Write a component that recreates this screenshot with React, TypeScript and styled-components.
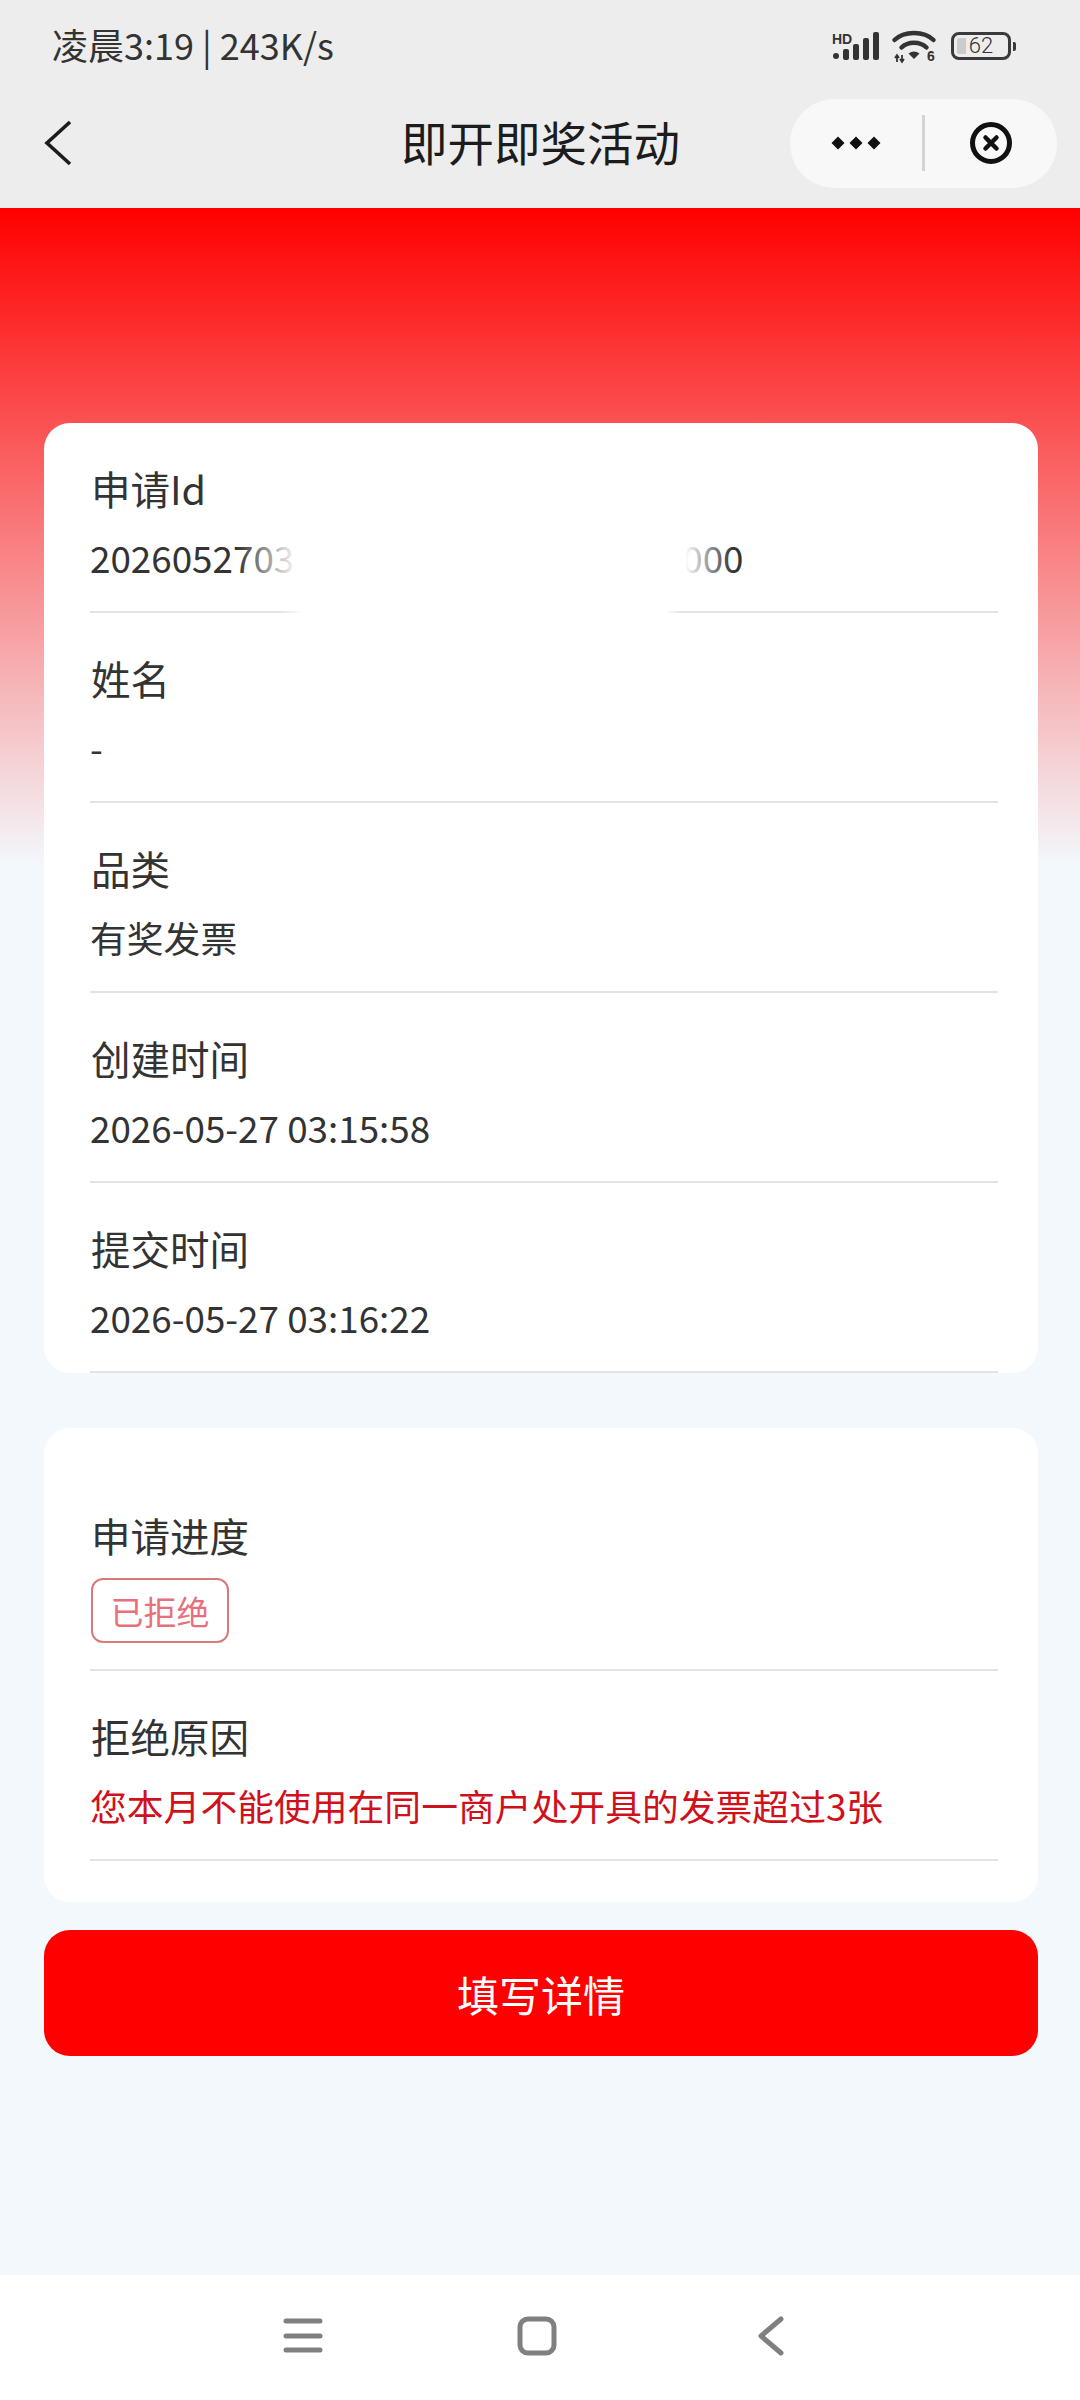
import React from "react";
import styled, { createGlobalStyle } from "styled-components";

const GlobalStyle = createGlobalStyle`
  html, body {
    margin: 0;
    padding: 0;
    background: #f3f8fc;
  }
  * {
    box-sizing: border-box;
  }
`;

const FONT = `"Noto Sans CJK SC", "Noto Sans", sans-serif`;

const App = () => {
  return (
    <Page>
      <GlobalStyle />
      <TopArea>
        <StatusBar>
          <StatusText>凌晨3:19 | 243K/s</StatusText>
          <StatusIcons>
            <svg width="48" height="30" viewBox="0 0 48 30" overflow="visible">
              <text x="0" y="13" fontFamily="Liberation Sans, sans-serif" fontSize="14" fontWeight="700" fill="#333">HD</text>
              <rect x="1" y="22" width="6" height="6" rx="3" fill="#333" />
              <rect x="11" y="18" width="6" height="11" rx="2" fill="#333" />
              <rect x="21" y="13" width="6" height="16" rx="2" fill="#333" />
              <rect x="31" y="7" width="6" height="22" rx="2" fill="#333" />
              <rect x="41" y="1" width="6" height="28" rx="2" fill="#333" />
            </svg>
            <svg width="44" height="33" viewBox="0 0 44 33" overflow="visible">
              <path d="M2.5 10 C12 0.5 32 0.5 41.5 10" fill="none" stroke="#333" strokeWidth="4.5" strokeLinecap="round" />
              <path d="M9.5 17.5 C16 11 28 11 34.5 17.5" fill="none" stroke="#333" strokeWidth="4.5" strokeLinecap="round" />
              <path d="M16.5 23.5 Q22 19.5 27.5 23.5 L22 29 Z" fill="#333" />
              <path d="M5 26 V32 M3 28 L5 25 L7 28 M10 25 V32 M8 29 L10 32 L12 29" fill="none" stroke="#333" strokeWidth="1.8" />
              <text x="35" y="31" fontFamily="Liberation Sans, sans-serif" fontSize="14" fontWeight="700" fill="#333">6</text>
            </svg>
            <BatteryWrap>
              <BatteryBody>
                <BatteryFill />
                <BatteryText>62</BatteryText>
              </BatteryBody>
              <BatteryNub />
            </BatteryWrap>
          </StatusIcons>
        </StatusBar>
        <NavBar>
          <BackButton>
            <svg width="28" height="46" viewBox="0 0 28 46">
              <path d="M26 2 L3 23 L26 44" fill="none" stroke="#1c1c1c" strokeWidth="3.6" />
            </svg>
          </BackButton>
          <NavTitle>即开即奖活动</NavTitle>
          <Capsule>
            <CapsuleSide>
              <svg width="50" height="14" viewBox="0 0 50 14">
                <path d="M7 0.5 L13.5 7 L7 13.5 L0.5 7 Z M25 0.5 L31.5 7 L25 13.5 L18.5 7 Z M43 0.5 L49.5 7 L43 13.5 L36.5 7 Z" fill="#111" />
              </svg>
            </CapsuleSide>
            <CapsuleDivider />
            <CapsuleSide>
              <svg width="44" height="44" viewBox="0 0 44 44">
                <circle cx="22" cy="22" r="18.5" fill="none" stroke="#111" strokeWidth="5" />
                <path d="M16.5 16.5 L27.5 27.5 M27.5 16.5 L16.5 27.5" fill="none" stroke="#111" strokeWidth="4.5" strokeLinecap="round" />
              </svg>
            </CapsuleSide>
          </Capsule>
        </NavBar>
      </TopArea>

      <Main>
        <Card>
          <Row>
            <Label>申请Id</Label>
            <Value>20260527030000000000000000000000</Value>
          </Row>
          <Row>
            <Label>姓名</Label>
            <Value>-</Value>
          </Row>
          <Row>
            <Label>品类</Label>
            <Value>有奖发票</Value>
          </Row>
          <Row>
            <Label>创建时间</Label>
            <Value>2026-05-27 03:15:58</Value>
          </Row>
          <Row>
            <Label>提交时间</Label>
            <Value>2026-05-27 03:16:22</Value>
          </Row>
          <Redaction />
        </Card>

        <ProgressCard>
          <TagRow>
            <Label>申请进度</Label>
            <StatusTag>已拒绝</StatusTag>
          </TagRow>
          <Row>
            <Label>拒绝原因</Label>
            <Value $danger>您本月不能使用在同一商户处开具的发票超过3张</Value>
          </Row>
        </ProgressCard>

        <PrimaryButton>填写详情</PrimaryButton>
      </Main>

      <BottomNav>
        <svg width="44" height="44" viewBox="0 0 44 44">
          <path d="M5 7 H39 M5 22 H39 M5 36 H39" fill="none" stroke="#808080" strokeWidth="5" strokeLinecap="round" />
        </svg>
        <svg width="44" height="44" viewBox="0 0 44 44">
          <rect x="5" y="5" width="34" height="34" rx="8" fill="none" stroke="#808080" strokeWidth="5" />
        </svg>
        <svg width="44" height="44" viewBox="0 0 44 44">
          <path d="M32 5 L12 22 L32 39" fill="none" stroke="#808080" strokeWidth="5" strokeLinecap="round" strokeLinejoin="round" />
        </svg>
      </BottomNav>
    </Page>
  );
};

export default App;

const Page = styled.div`
  display: flex;
  flex-direction: column;
  width: 1080px;
  height: 2400px;
  overflow: hidden;
  font-family: ${FONT};
  background: #f3f8fc;
`;

const TopArea = styled.div`
  flex: none;
  background: #ededed;
`;

const StatusBar = styled.div`
  display: flex;
  align-items: center;
  justify-content: space-between;
  height: 88px;
  padding: 0 64px 0 52px;
`;

const StatusText = styled.span`
  font-size: 36px;
  font-weight: 400;
  color: #333333;
`;

const StatusIcons = styled.div`
  display: flex;
  align-items: center;
  gap: 12px;
  padding-top: 4px;
`;

const BatteryWrap = styled.div`
  display: flex;
  align-items: center;
  gap: 2px;
  margin-left: 3px;
`;

const BatteryBody = styled.div`
  position: relative;
  display: flex;
  align-items: center;
  justify-content: center;
  width: 60px;
  height: 28px;
  border: 3px solid #3a3a3a;
  border-radius: 8px;
`;

const BatteryFill = styled.div`
  position: absolute;
  left: 3px;
  top: 3px;
  bottom: 3px;
  width: 9px;
  background: #cccccc;
  border-radius: 2px 0 0 2px;
`;

const BatteryText = styled.span`
  position: relative;
  font-family: Roboto, sans-serif;
  font-size: 22px;
  font-weight: 300;
  line-height: 22px;
  color: #333333;
`;

const BatteryNub = styled.div`
  width: 3px;
  height: 9px;
  background: #3a3a3a;
  border-radius: 0 2px 2px 0;
`;

const NavBar = styled.div`
  display: grid;
  grid-template-columns: 1fr auto 1fr;
  align-items: center;
  height: 120px;
  padding: 0 23px 10px 44px;
`;

const BackButton = styled.div`
  display: flex;
  align-items: center;
  height: 46px;
`;

const NavTitle = styled.div`
  font-size: 46.5px;
  line-height: 60px;
  color: #1c1c1c;
  margin-top: -5px;
  transform: translateX(-10px);
`;

const Capsule = styled.div`
  justify-self: end;
  display: flex;
  align-items: center;
  width: 267px;
  height: 89px;
  border-radius: 45px;
  background: #f8f8f8;
`;

const CapsuleSide = styled.div`
  flex: 1;
  display: flex;
  align-items: center;
  justify-content: center;
`;

const CapsuleDivider = styled.div`
  flex: none;
  width: 3px;
  height: 56px;
  background: #d4d4d4;
`;

const Main = styled.main`
  flex: 1;
  display: flex;
  flex-direction: column;
  padding: 215px 42px 0 44px;
  background: linear-gradient(to bottom, #ff0000, #f3f8fc) no-repeat;
  background-size: 100% 657px;
`;

const Card = styled.section`
  position: relative;
  display: flex;
  flex-direction: column;
  padding: 0 40px 0 46px;
  background: #ffffff;
  border-radius: 26px;
`;

const ProgressCard = styled(Card)`
  margin-top: 55px;
  padding-top: 42px;
  padding-bottom: 41px;
`;

const Row = styled.div`
  display: flex;
  flex-direction: column;
  height: 190px;
  padding-top: 37px;
  border-bottom: 2px solid #e4e4e4;
`;

const TagRow = styled(Row)`
  height: 201px;
`;

const Label = styled.div`
  padding-left: 1px;
  font-size: 39.5px;
  line-height: 56px;
  color: #333333;
`;

const Value = styled.div<{ $danger?: boolean }>`
  margin-top: 13px;
  font-size: 36.8px;
  line-height: 56px;
  color: ${(p) => (p.$danger ? "#d0111b" : "#333333")};
  white-space: nowrap;
`;

const StatusTag = styled.div`
  display: flex;
  align-items: center;
  justify-content: center;
  align-self: flex-start;
  width: 138px;
  height: 65px;
  margin-top: 15px;
  margin-left: 1px;
  font-size: 33px;
  color: #e8707a;
  border: 2px solid #d97a7a;
  border-radius: 12px;
`;

const PrimaryButton = styled.button`
  display: block;
  width: 100%;
  height: 126px;
  margin-top: 28px;
  border: none;
  border-radius: 26px;
  background: #ff0000;
  font-family: ${FONT};
  font-size: 42px;
  color: #ffffff;
`;

const BottomNav = styled.nav`
  flex: none;
  display: flex;
  align-items: center;
  justify-content: center;
  gap: 190px;
  height: 125px;
  padding: 0 6px 4px 0;
  background: #ffffff;
`;

/* white smear over part of the id, sits on top of the card */
const Redaction = styled.div`
  position: absolute;
  left: 193px;
  top: 0;
  width: 496px;
  height: 191px;
  background:
    linear-gradient(to right, rgba(255, 255, 255, 0), #fff 60px, #fff 448px, rgba(255, 255, 255, 0)) no-repeat top / 100% 165px,
    linear-gradient(to right, rgba(255, 255, 255, 0) 43px, #fff 66px, #fff 428px, rgba(255, 255, 255, 0) 443px) no-repeat bottom / 100% 26px;
`;
